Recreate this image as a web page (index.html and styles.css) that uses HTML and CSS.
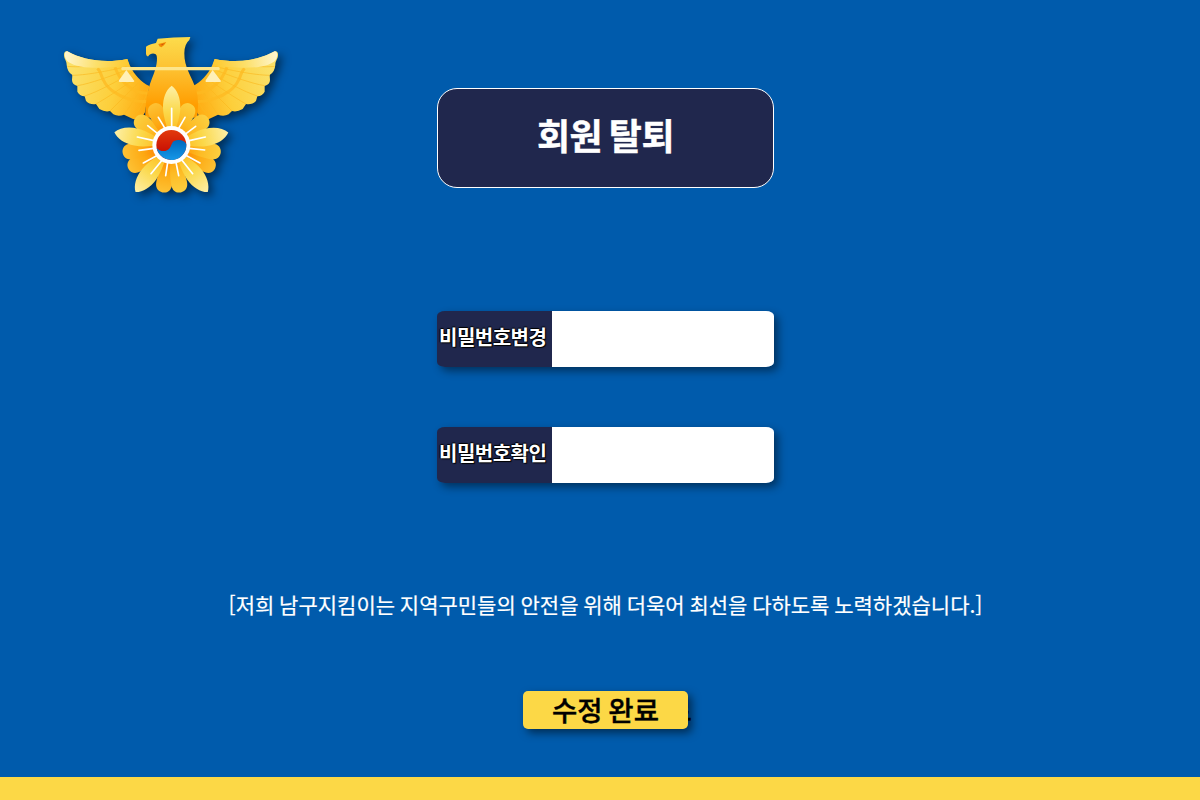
FILE: index.html
```html
<!DOCTYPE html>
<html lang="ko">
<head>
<meta charset="utf-8">
<title>회원 탈퇴</title>
<link rel="stylesheet" href="styles.css">
</head>
<body>
<svg class="emblem" viewBox="0 0 720 540" aria-hidden="true">
  <defs>
    <linearGradient id="body" x1="0" y1="0" x2="0" y2="1"><stop offset="0" stop-color="#fcdc4c"/><stop offset=".4" stop-color="#fdc131"/><stop offset=".85" stop-color="#ff9d00"/></linearGradient>
    <linearGradient id="wing" gradientUnits="userSpaceOnUse" x1="60" y1="160" x2="300" y2="220"><stop offset="0" stop-color="#fae067"/><stop offset=".55" stop-color="#fdcf3b"/><stop offset="1" stop-color="#ffa90f"/></linearGradient>
    <linearGradient id="edge" gradientUnits="userSpaceOnUse" x1="45" y1="90" x2="235" y2="120"><stop offset="0" stop-color="#fff6d0"/><stop offset=".5" stop-color="#fce06b"/><stop offset="1" stop-color="#fdc92f"/></linearGradient>
    <linearGradient id="big" x1="0" y1="0" x2="0" y2="1"><stop offset="0" stop-color="#fdf0a8"/><stop offset=".5" stop-color="#fbd84a"/><stop offset="1" stop-color="#ffb414"/></linearGradient>
    <linearGradient id="small" x1="0" y1="0" x2="0" y2="1"><stop offset="0" stop-color="#fdc235"/><stop offset=".5" stop-color="#fda912"/><stop offset="1" stop-color="#ff7800"/></linearGradient>
    <linearGradient id="light" x1="0" y1="0" x2="0" y2="1"><stop offset="0" stop-color="#fccf40"/><stop offset=".5" stop-color="#fdbb24"/><stop offset="1" stop-color="#ff9400"/></linearGradient>
    <linearGradient id="red" x1="0" y1="0" x2="0" y2="1"><stop offset="0" stop-color="#e23a0c"/><stop offset="1" stop-color="#c00000"/></linearGradient>
    <linearGradient id="blue" x1="0" y1="0" x2="0" y2="1"><stop offset="0" stop-color="#0068bd"/><stop offset="1" stop-color="#1598e8"/></linearGradient>
    <g id="wingShape">
      <path fill="url(#wing)" d="M52 79C100 106 165 116 232 102L240 122C253 149 273 171 298 183L285 262Q273 288 249 282L222 269Q205 276 190 268L180 258Q165 262 148 252L138 237Q120 240 108 228L104 214Q88 212 82 200L82 183Q66 178 66 165L67 150Q52 142 50 120C50 106 42 103 42 90Q42 77 52 79Z"/>
      <path class="feather" d="M52 124C80 127 118 125 231 112M67 151C105 150 150 143 230 125M82 182C120 176 181 154 238 132M104 213C145 200 200 169 248 142M138 237C170 219 218 187 260 157M180 258C205 233 240 198 270 169M222 269C240 245 264 206 281 177M253 271C274 249 290 214 294 190"/>
      <path class="arc" d="M142 130C155 140 153 158 162 168C171 190 202 211 231 220C254 228 273 231 291 229M195 127C203 148 215 167 228 178C247 195 270 205 293 205"/>
      <path fill="url(#edge)" d="M52 79C100 106 165 116 232 102L237 119C185 129 93 137 54 110C43 101 40 79 52 79Z"/>
    </g>
    <path id="pointed" d="M365 182C382 194 392 220 391 249C390 279 379 304 369 340H361C351 304 340 279 339 249C338 220 348 194 365 182Z"/>
    <path id="round" d="M365 224C380 224 389 235 389 251C389 280 381 310 373 346H357C349 310 341 280 341 251C341 235 350 224 365 224Z"/>
  </defs>
  <use href="#wingShape"/>
  <use href="#wingShape" transform="translate(726 0) scale(-1 1)"/>
  <path fill="url(#body)" d="M323 41Q370 36 421 36L418 45Q403 57 403 85C402 126 426 157 437 190C447 220 444 249 442 278H286C285 240 291 199 305 163C315 138 324 112 320 92C317 83 300 83 295 94Q287 94 288 80V65Q298 58 318 54Z"/>
  <path fill="#f38b00" d="M325 57L349 51L342 61L334 67L328 64Z"/>
  <path fill="#ce4e12" d="M331 60L345 54L337 61Z"/>
  <rect x="214" y="126" width="295" height="10" rx="4" fill="#fde58b"/>
  <path fill="#fff0b8" d="M229 135L253 168Q253 171 249 171H209Q205 171 207 166ZM488 135L513 168Q513 171 509 171H469Q465 171 467 166Z"/>
  <circle cx="365" cy="360" r="82" fill="#ff9a08"/>
  <g>
    <use href="#round" fill="url(#light)" transform="rotate(-53 365 360)"/><use href="#round" fill="url(#light)" transform="rotate(53 365 360)"/>
    <use href="#round" fill="url(#small)" transform="rotate(-25 365 360)"/><use href="#round" fill="url(#light)" transform="rotate(25 365 360)"/>
    <use href="#round" fill="url(#small)" transform="rotate(-119 365 360) translate(0 -12)"/><use href="#round" fill="url(#small)" transform="rotate(119 365 360) translate(0 -12)"/>
    <use href="#round" fill="url(#small)" transform="rotate(-99 365 360) translate(0 -13)"/><use href="#round" fill="url(#light)" transform="rotate(99 365 360) translate(0 -13)"/>
    <use href="#round" fill="url(#small)" transform="rotate(-169 365 360) translate(0 -9)"/><use href="#round" fill="url(#light)" transform="rotate(169 365 360) translate(0 -9)"/>
  </g>
  <g fill="url(#big)">
    <use href="#pointed"/>
    <use href="#pointed" transform="rotate(-77.5 365 360) translate(0 2)"/><use href="#pointed" transform="rotate(77.5 365 360) translate(0 4)"/>
    <use href="#pointed" transform="rotate(-142.5 365 360)"/><use href="#pointed" transform="rotate(142.5 365 360)"/>
  </g>
  <path class="rays" d="M365 250V310M325 277L345 310M405 277L386 310M293 302L323 326M437 304L408 326M262 336L312 347M466 336L418 347M267 376L312 370M464 375L418 370M280 414L320 392M450 414L410 392M303 446L336 406M428 446L396 406M347 452L353 412M386 452L378 412"/>
  <circle cx="364" cy="360" r="57" fill="#fff"/>
  <circle cx="364" cy="360" r="45" fill="url(#red)"/>
  <path fill="url(#blue)" d="M320 369C329 381 351 382 360 368C367 356 366 345 386 345Q402 345 409 357A45 45 0 0 1 320 369Z"/>
</svg>
<main class="page">
  <h1 class="title">회원 탈퇴</h1>
  <form class="form">
    <label class="field"><span class="field-label">비밀번호변경</span><input class="field-input" type="password"></label>
    <label class="field"><span class="field-label">비밀번호확인</span><input class="field-input" type="password"></label>
    <p class="message">[저희 남구지킴이는 지역구민들의 안전을 위해 더욱어 최선을 다하도록 노력하겠습니다.]</p>
    <div class="submit-wrap"><span class="submit-back" aria-hidden="true">수정 완료</span><button class="submit" type="button">수정 완료</button></div>
  </form>
</main>
<footer class="footer"></footer>
</body>
</html>
```
FILE: styles.css
```css
* { box-sizing: border-box; }
body {
  margin: 0;
  height: 800px;
  display: flex;
  flex-direction: column;
  overflow: hidden;
  background: #005bac;
  font-family: "Noto Sans CJK KR", sans-serif;
}
.emblem {
  position: absolute;
  left: 50px;
  top: 25px;
  width: 240px;
  height: 180px;
  overflow: visible;
  filter: drop-shadow(4px 4px 4px rgba(0, 0, 0, .5));
}
.feather { fill: none; stroke: #fbb91e; stroke-width: 3; opacity: .65; }
.arc { fill: none; stroke: #fdba22; stroke-width: 9; opacity: .75; }
.rays { fill: none; stroke: #fff; stroke-width: 5; stroke-linecap: round; }
.page {
  flex: 1;
  display: flex;
  flex-direction: column;
  align-items: center;
  padding: 88px 0 0 11px;
}
.title {
  width: 337px;
  height: 100px;
  margin: 0;
  border: 1px solid #fff;
  border-radius: 20px;
  background: #20274d;
  color: #fff;
  font-size: 36px;
  font-weight: 700;
  line-height: 90px;
  letter-spacing: -.5px;
  word-spacing: -3px;
  text-align: center;
  -webkit-text-stroke: .4px #fff;
}
.form {
  display: flex;
  flex-direction: column;
  align-items: center;
  margin-top: 123px;
}
.field {
  display: flex;
  width: 337px;
  height: 56px;
  margin-bottom: 60px;
  border-radius: 8px / 5px;
  box-shadow: 4px 4px 8px rgba(0, 0, 0, .45);
}
.field-label {
  width: 115px;
  padding-left: 2px;
  border-radius: 8px 0 0 8px / 5px 0 0 5px;
  background: #20274d;
  color: #fff;
  font-size: 20px;
  font-weight: 700;
  line-height: 52px;
  letter-spacing: -.5px;
  white-space: nowrap;
  text-shadow: 1px 1px 1px #000, -1px 0 1px #000, 0 -1px 1px #000;
}
.field-input {
  width: 222px;
  padding: 0 10px;
  border: 0;
  border-radius: 0 8px 8px 0 / 0 5px 5px 0;
  background: #fff;
  outline: 0;
}
.message {
  margin: 46px 0 0;
  color: #fff;
  font-size: 21px;
  line-height: 30px;
  word-spacing: -1.1px;
  white-space: nowrap;
  -webkit-text-stroke: .2px #fff;
}
.submit-wrap {
  position: relative;
  width: 164.5px;
  height: 38px;
  margin-top: 72px;
  font-size: 27.5px;
  font-weight: 500;
  line-height: 36px;
  word-spacing: -2px;
  -webkit-text-stroke: .4px #000;
}
.submit-back { position: absolute; right: -4px; top: 0; white-space: nowrap; }
.submit {
  position: relative;
  width: 100%;
  height: 38px;
  padding: 0 0 2px;
  border: 0;
  border-radius: 5px;
  background: #fcd846;
  color: #000;
  font: inherit;
  word-spacing: -2px;
  box-shadow: 4px 4px 8px rgba(0, 0, 0, .5);
}
.footer { height: 23px; background: #fcd846; }
```
